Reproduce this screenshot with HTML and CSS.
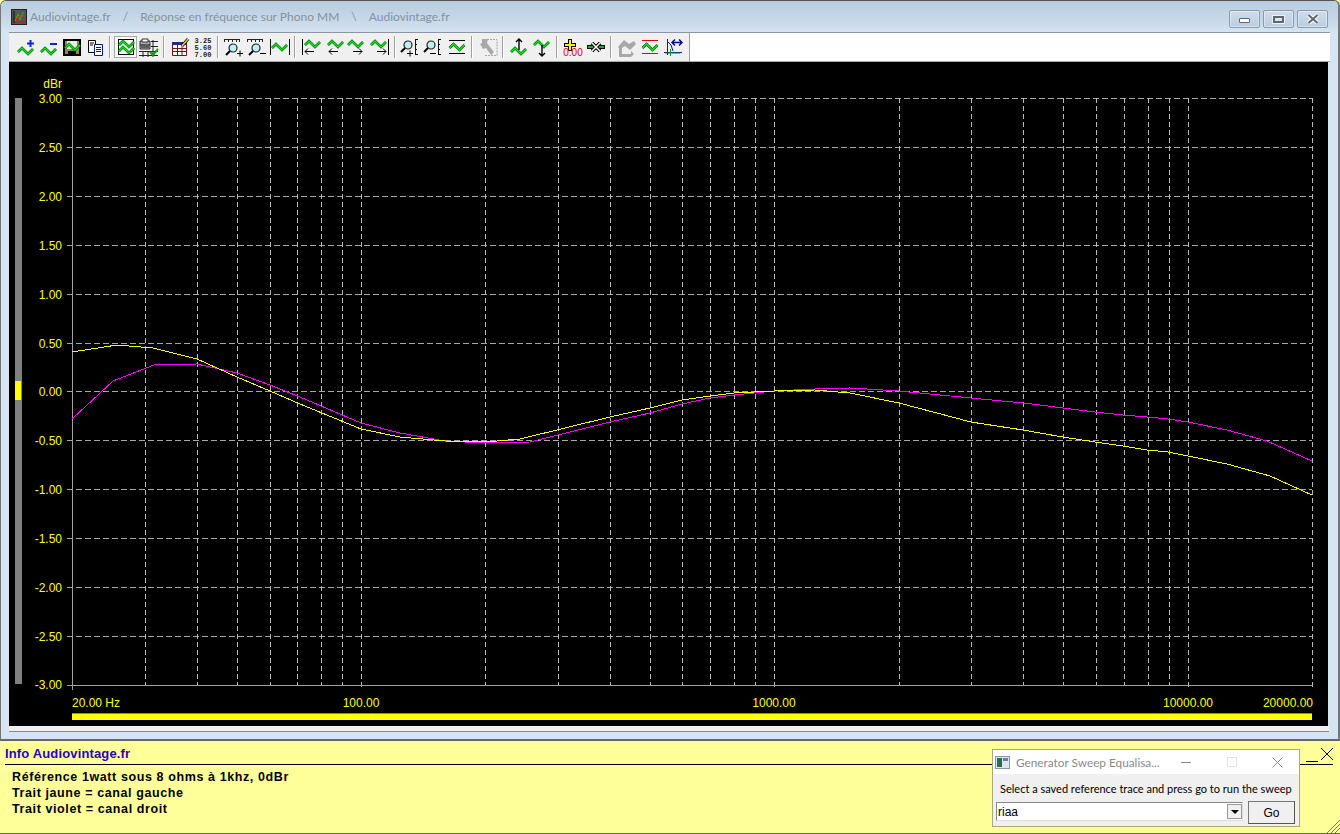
FILE: index.html
```html
<!DOCTYPE html>
<html lang="fr">
<head>
    <meta charset="UTF-8">
    <title>Audiovintage.fr - Réponse en fréquence sur Phono MM</title>
    <link rel="stylesheet" href="styles.css">
</head>
<body>
    <svg class="defs" width="0" height="0">
        <defs>
            <g id="wave">
                <path class="wave-out" d="M0 5 L4 1 L10 7 L15 2"/>
                <path class="wave-in" d="M0 5 L4 1 L10 7 L15 2"/>
            </g>
            <g id="lens">
                <circle cx="8" cy="7" r="4" class="lens-glass"/>
                <path d="M5 10 L1 14" class="lens-handle"/>
            </g>
        </defs>
    </svg>

    <div class="window">
        <div class="titlebar">
            <svg class="app-icon" viewBox="0 0 16 16">
                <rect x="0.5" y="0.5" width="15" height="15" fill="#555" stroke="#222"/>
                <path d="M2 13H14" stroke="#e00"/>
                <path d="M3 2V14" stroke="#111"/>
                <path d="M4 12L7 5L9 11L12 3" fill="none" stroke="#0c0"/>
                <path d="M5 10L8 7L10 9L13 6" fill="none" stroke="#e22"/>
            </svg>
            <span class="title-text">Audiovintage.fr</span>
            <span class="title-text title-sep">/</span>
            <span class="title-text">Réponse en fréquence sur Phono MM</span>
            <span class="title-text title-sep">\</span>
            <span class="title-text">Audiovintage.fr</span>
            <div class="win-buttons">
                <div class="win-btn"><span class="glyph-min"></span></div>
                <div class="win-btn"><span class="glyph-max"></span></div>
                <div class="win-btn">
                    <svg width="12" height="10" viewBox="0 0 12 10"><path d="M1.5 1L10.5 9M10.5 1L1.5 9" stroke="#fff" stroke-width="4"/><path d="M1.5 1L10.5 9M10.5 1L1.5 9" stroke="#5b6875" stroke-width="2"/></svg>
                </div>
            </div>
        </div>

        <div class="toolbar">
            <div class="tools">
                <svg class="tool" viewBox="0 0 22 22"><use href="#wave" x="3" y="11"/><path d="M12 7.500h7M15.500 4v7" stroke="#0a2ad0" stroke-width="2"/></svg>
                <svg class="tool" viewBox="0 0 22 22"><use href="#wave" x="3" y="11"/><path d="M12 8h7" stroke="#0a2ad0" stroke-width="2"/></svg>
                <svg class="tool" viewBox="0 0 22 22"><path d="M3 4H19V19H3Z" fill="#8a8a50" stroke="#000" stroke-width="2"/><rect x="6" y="5" width="10" height="8" fill="#e8eedc"/><rect x="7" y="15" width="8" height="4" fill="#000"/><use href="#wave" x="4" y="7"/></svg>
                <svg class="tool" viewBox="0 0 22 22"><path d="M4.500 4.500H11.500V16.500H4.500Z" fill="#fff" stroke="#000"/><path d="M10.500 8.500H18.500V19.500H10.500Z" fill="#fff" stroke="#001a80"/><path d="M12 11.500H17M12 13.500H17M12 15.500H17" stroke="#0018a0"/><path d="M6 7H10M6 9H9" stroke="#000"/></svg>
                <i class="sep"></i>
                <div class="tool-on">
                    <svg class="tool" viewBox="0 0 22 22"><rect x="3.500" y="3.500" width="15" height="15" fill="#fff" stroke="#000"/><use href="#wave" x="4" y="4"/><use href="#wave" x="4" y="10"/></svg>
                </div>
                <svg class="tool" viewBox="0 0 22 22"><path d="M2 5H12V13H2Z" fill="#aaa" stroke="#333"/><path d="M4 3H10V6H4Z" fill="#fff" stroke="#333"/><path d="M2 9H12M3 11H11" stroke="#111"/><path d="M13 5.500H20M13 10.500H20M1 15.500H20M1 19.500H20M5 15V21M10 15V21M15 4V21" stroke="#222"/><path d="M12 16L15 19L20 13" fill="none" stroke="#0a0" stroke-width="2"/></svg>
                <i class="sep"></i>
                <svg class="tool" viewBox="0 0 22 22"><path d="M3.500 7.500H17.500V19.500H3.500Z" fill="#fff" stroke="#7a1010"/><path d="M3 6H18V9H3Z" fill="#1a2a90"/><path d="M4 12.500H17M4 15.500H17M8.500 9V19M13 9V19" stroke="#7a1010"/><path d="M13 10L19 3" stroke="#111" stroke-width="3"/><path d="M13 10L19 3" stroke="#f0d020" stroke-width="1.500"/></svg>
                <svg class="tool" viewBox="0 0 22 22"><text x="11" y="7" class="mini-num">3.25</text><text x="11" y="14" class="mini-num">5.60</text><text x="11" y="21" class="mini-num">7.00</text></svg>
                <i class="sep"></i>
                <svg class="tool" viewBox="0 0 22 22"><path d="M1 3.500H17M1.500 3V6M5.500 3V6M9.500 3V6M13.500 3V6M16.500 3V6" stroke="#222"/><use href="#lens" x="2" y="5"/><path d="M14 17.500h6M17 14.500v6" stroke="#000"/></svg>
                <svg class="tool" viewBox="0 0 22 22"><path d="M1 3.500H17M1.500 3V6M5.500 3V6M9.500 3V6M13.500 3V6M16.500 3V6" stroke="#222"/><use href="#lens" x="2" y="5"/><path d="M14 17.500h6" stroke="#000"/></svg>
                <svg class="tool" viewBox="0 0 22 22"><path d="M1.500 3V19M20.500 3V19" stroke="#111"/><use href="#wave" x="3" y="7"/></svg>
                <i class="sep"></i>
                <svg class="tool" viewBox="0 0 22 22"><use href="#wave" x="5" y="4"/><path d="M2.500 3V19" stroke="#000"/><path d="M14 15.500H5M8 12.500L5 15.500L8 18.500" fill="none" stroke="#000"/></svg>
                <svg class="tool" viewBox="0 0 22 22"><use href="#wave" x="5" y="4"/><path d="M15 15.500H6M9 12.500L6 15.500L9 18.500" fill="none" stroke="#000"/></svg>
                <svg class="tool" viewBox="0 0 22 22"><use href="#wave" x="2" y="4"/><path d="M7 15.500H16M13 12.500L16 15.500L13 18.500" fill="none" stroke="#000"/></svg>
                <svg class="tool" viewBox="0 0 22 22"><use href="#wave" x="2" y="4"/><path d="M19.500 3V19" stroke="#000"/><path d="M8 15.500H17M14 12.500L17 15.500L14 18.500" fill="none" stroke="#000"/></svg>
                <i class="sep"></i>
                <svg class="tool" viewBox="0 0 22 22"><use href="#lens" x="0" y="2"/><path d="M15 3.500H18M15.500 3V19M15 8.500H17M15 13.500H17M15 18.500H18" stroke="#111"/><path d="M7 17.500h6M10 14.500v6" stroke="#000"/></svg>
                <svg class="tool" viewBox="0 0 22 22"><use href="#lens" x="0" y="2"/><path d="M15 3.500H18M15.500 3V19M15 8.500H17M15 13.500H17M15 18.500H18" stroke="#111"/><path d="M7 17.500h6" stroke="#000"/></svg>
                <svg class="tool" viewBox="0 0 22 22"><path d="M3 4.500H19M3 17.500H19" stroke="#000"/><use href="#wave" x="3.500" y="7"/></svg>
                <i class="sep"></i>
                <svg class="tool" viewBox="0 0 22 22"><path d="M7 3.500H20V19.500H7" fill="none" stroke="#a8a8a8" stroke-dasharray="2 1"/><path d="M5 3H11L10 7L13 11L17 16L14 19L9 12L6 13L3 8L5 7Z" fill="#a8a8a8"/></svg>
                <i class="sep"></i>
                <svg class="tool" viewBox="0 0 22 22"><use href="#wave" x="3" y="11"/><path d="M11 14V3M8 6L11 3L14 6" fill="none" stroke="#000" stroke-width="1.400"/></svg>
                <svg class="tool" viewBox="0 0 22 22"><use href="#wave" x="3" y="4"/><path d="M11 9V20M8 17L11 20L14 17" fill="none" stroke="#000" stroke-width="1.400"/></svg>
                <i class="sep"></i>
                <svg class="tool" viewBox="0 0 22 22"><path d="M8 3V15M2 9H14" stroke="#000" stroke-width="4"/><path d="M8 4V14M3 9H13" stroke="#ffee00" stroke-width="2"/><text x="11" y="20" class="mini-red">0.00</text></svg>
                <svg class="tool" viewBox="0 0 22 22"><path d="M2 11H20" stroke="#000" stroke-width="4"/><path d="M3 11H19" stroke="#00c000" stroke-width="2"/><path d="M7 7L15 15M15 7L7 15" stroke="#000" stroke-width="3.500"/><path d="M7 7L15 15M15 7L7 15" stroke="#fff" stroke-width="1.500"/></svg>
                <i class="sep"></i>
                <svg class="tool" viewBox="0 0 22 22"><path d="M2 11L8 4L13 8L18 5L20 8L14 14L9 10L6 12V18H15V15L18 18L15 21H3V12Z" fill="#a8a8a8"/></svg>
                <svg class="tool" viewBox="0 0 22 22"><path d="M3 4.500H19M3 17.500H19" stroke="#e00000"/><use href="#wave" x="3.500" y="7"/></svg>
                <svg class="tool" viewBox="0 0 22 22"><path d="M5.500 3V19M2 16.500H20" stroke="#0018d0"/><path d="M3 17H18" stroke="#008000"/><path d="M5 5L9 9L11 15" fill="none" stroke="#0018d0"/><path d="M8.500 13V20" stroke="#00a000"/><path d="M10 6.500H20M13 3.500L10 6.500L13 9.500M17 3.500L20 6.500L17 9.500" fill="none" stroke="#000c90" stroke-width="1.500"/></svg>
            </div>
            <div class="toolbar-rest"></div>
        </div>

        <div class="chart">
            <svg class="chart-svg" viewBox="9 62 1319 664" width="1319" height="664">
                <path class="grid grid-h" d="M67 98.500H1312M67 147.500H1312M67 196.500H1312M67 245.500H1312M67 294.500H1312M67 343.500H1312M67 391.500H1312M67 440.500H1312M67 489.500H1312M67 538.500H1312M67 587.500H1312M67 636.500H1312"/>
                <path class="grid" d="M145.500 98V685M197.500 98V685M237.500 98V685M270.500 98V685M297.500 98V685M321.500 98V685M342.500 98V685M361.500 98V689M485.500 98V685M558.500 98V685M610.500 98V685M650.500 98V685M682.500 98V685M710.500 98V685M734.500 98V685M755.500 98V685M774.500 98V689M899.500 98V685M971.500 98V685M1023.500 98V685M1063.500 98V685M1096.500 98V685M1124.500 98V685M1148.500 98V685M1169.500 98V685M1188.500 98V689M1312.500 98V689"/>
                <path class="axis" d="M72.500 98V690M67 685.500H1312"/>

                <polyline class="trace trace-m" points="72,419 113,381 154,365 197,364 237,373 270,385 300,397 361,423 400,433 445,441 485,443 530,442 610,422 650,413 682,404 710,398 734,395 774,391 815,389 850,388 899,391 971,398 1023,403 1040,405 1063,408 1095,412 1123,415 1147,417 1168,419 1188,422 1227,430 1267,441 1312,461"/>
                <polyline class="trace trace-y" points="72,352 117,345 153,348 197,359 237,377 270,391 300,404 361,429 400,437 445,441 485,442 520,439 610,417 650,408 682,400 710,396 734,393 774,391 815,390 850,393 899,403 971,422 1023,430 1040,433 1063,437 1095,442 1123,446 1147,450 1168,452 1188,456 1227,464 1270,476 1312,495"/>

                <text class="tick-y" x="62" y="88">dBr</text>
                <text class="tick-y" x="62" y="103">3.00</text>
                <text class="tick-y" x="62" y="152">2.50</text>
                <text class="tick-y" x="62" y="201">2.00</text>
                <text class="tick-y" x="62" y="250">1.50</text>
                <text class="tick-y" x="62" y="299">1.00</text>
                <text class="tick-y" x="62" y="348">0.50</text>
                <text class="tick-y" x="62" y="396">0.00</text>
                <text class="tick-y" x="62" y="445">-0.50</text>
                <text class="tick-y" x="62" y="494">-1.00</text>
                <text class="tick-y" x="62" y="543">-1.50</text>
                <text class="tick-y" x="62" y="592">-2.00</text>
                <text class="tick-y" x="62" y="641">-2.50</text>
                <text class="tick-y" x="62" y="689">-3.00</text>

                <text class="tick-x" x="72" y="707">20.00 Hz</text>
                <text class="tick-x mid" x="361" y="707">100.00</text>
                <text class="tick-x mid" x="774" y="707">1000.00</text>
                <text class="tick-x mid" x="1188" y="707">10000.00</text>
                <text class="tick-x end" x="1313" y="707">20000.00</text>

                <rect class="bar-grey" x="15" y="98" width="7" height="586"/>
                <rect class="bar-yellow" x="15" y="381" width="6" height="19"/>
                <rect class="bar-yellow" x="72" y="714" width="1240" height="6"/>
                <path class="bar-edge" d="M72 713.500H1312"/>
            </svg>
        </div>
        <div class="chart-foot"></div>
    </div>

    <div class="info">
        <div class="info-head">Info Audiovintage.fr</div>
        <div class="info-body">
            <div>Référence 1watt sous 8 ohms à 1khz, 0dBr</div>
            <div>Trait jaune = canal gauche</div>
            <div>Trait violet = canal droit</div>
        </div>
        <svg class="info-close" width="28" height="16" viewBox="0 0 28 16"><path d="M0 14.500H12M15 1L27 13M27 1L15 13" stroke="#000" fill="none"/></svg>
        <svg class="grip" width="14" height="14" viewBox="0 0 14 14"><path d="M1 14L14 1M5 14L14 5M9 14L14 9" stroke="#777"/></svg>

        <div class="sweep">
            <div class="sweep-title">
                <svg class="sweep-icon" width="15" height="13" viewBox="0 0 15 13"><rect x="0.500" y="0.500" width="14" height="12" fill="#dfe6ee" stroke="#8a96a5"/><rect x="2" y="2" width="5" height="9" fill="#2c6a55"/><rect x="8" y="2" width="5" height="3" fill="#6a7fa5"/></svg>
                <span class="sweep-name">Generator Sweep Equalisa...</span>
                <span class="sweep-ctl sweep-min"></span>
                <span class="sweep-ctl sweep-max"></span>
                <svg class="sweep-x" width="11" height="11" viewBox="0 0 11 11"><path d="M0.500 0.500L10.500 10.500M10.500 0.500L0.500 10.500" stroke="#8a8a8a"/></svg>
            </div>
            <div class="sweep-body">
                <div class="sweep-msg">Select a saved reference trace and press go to run the sweep</div>
                <div class="sweep-row">
                    <div class="combo">
                        <span class="combo-text">riaa</span>
                        <span class="combo-arrow"></span>
                    </div>
                    <button class="go-btn">Go</button>
                </div>
            </div>
        </div>
    </div>
</body>
</html>
```

FILE: styles.css
```css
html, body {
  margin: 0;
  padding: 0;
}
body {
  width: 1340px;
  height: 834px;
  overflow: hidden;
  display: flex;
  flex-direction: column;
  background-color: #ffff99;
  font-family: "Liberation Sans", Arial, sans-serif;
}
.defs {
  position: absolute;
}
.wave-out {
  fill: none;
  stroke: #0a4a20;
  stroke-width: 2.6;
}
.wave-in {
  fill: none;
  stroke: #00ee00;
  stroke-width: 1.5;
}
.lens-glass {
  fill: #bfeef5;
  stroke: #222;
  stroke-width: 1.2;
}
.lens-handle {
  fill: none;
  stroke: #000;
  stroke-width: 2;
}

/* fenetre principale */
.window {
  height: 741px;
  flex-shrink: 0;
  box-sizing: border-box;
  background-color: #d7e4f2;
  border-top: 1px solid #555;
  border-left: 1px solid #777;
  border-right: 2px solid #777;
  border-bottom: 2px solid #666;
  border-radius: 6px 6px 0 0;
  display: flex;
  flex-direction: column;
}
.titlebar {
  height: 31px;
  flex-shrink: 0;
  display: flex;
  align-items: center;
  padding-left: 10px;
  background: linear-gradient(#b8cde0, #c9dae9 70%, #d7e4f2);
  border-radius: 6px 6px 0 0;
}
.app-icon {
  width: 16px;
  height: 16px;
  margin-right: 3px;
}
.title-text {
  font-family: "Lato", sans-serif;
  font-size: 12px;
  color: #84929e;
  white-space: nowrap;
}
.title-sep {
  margin: 0 12px;
}
.win-buttons {
  margin-left: auto;
  margin-right: 10px;
  display: flex;
  gap: 3px;
  align-self: flex-start;
  margin-top: 9px;
}
.win-btn {
  width: 29px;
  height: 16px;
  border: 1px solid #8a9bb0;
  border-radius: 2px;
  background: linear-gradient(#cfdceb, #bccde0);
  box-shadow: inset 0 0 0 1px rgba(255, 255, 255, 0.4);
  display: flex;
  align-items: center;
  justify-content: center;
}
.glyph-min {
  width: 9px;
  height: 3px;
  margin-top: 3px;
  background-color: #fff;
  border: 1px solid #5b6875;
  border-radius: 1px;
}
.glyph-max {
  width: 7px;
  height: 3px;
  background-color: #dbe5ef;
  border: 2px solid #5b6875;
  outline: 1px solid rgba(255, 255, 255, 0.7);
}

/* barre d'outils */
.toolbar {
  height: 30px;
  flex-shrink: 0;
  margin: 0 8px;
  display: flex;
  border-top: 1px solid #8a96a3;
  border-bottom: 1px solid #a8a8a8;
  box-sizing: border-box;
}
.tools {
  width: 681px;
  box-sizing: border-box;
  display: flex;
  align-items: center;
  padding-left: 5px;
  background-color: #f0f0f0;
  border-right: 1px solid #a0a0a0;
}
.toolbar-rest {
  flex: 1;
  background-color: #fff;
}
.tool {
  width: 22px;
  height: 22px;
  margin: 0 0.5px;
  flex-shrink: 0;
}
.tool-on {
  display: flex;
  outline: 1px solid #a8a8a8;
  outline-offset: -1px;
  background-color: #fbfbfb;
}
.sep {
  width: 1px;
  height: 22px;
  margin: 0 3px;
  background-color: #a0a0a0;
  border-right: 1px solid #fff;
  flex-shrink: 0;
}
.mini-num {
  font-family: "Liberation Mono", monospace;
  font-size: 7px;
  font-weight: bold;
  text-anchor: middle;
  fill: #222;
}
.mini-red {
  font-family: "Liberation Sans", sans-serif;
  font-size: 10px;
  text-anchor: middle;
  fill: #e00000;
}

/* graphique */
.chart {
  height: 664px;
  flex-shrink: 0;
  margin-left: 8px;
  background-color: #000;
  width: 1319px;
}
.chart-svg {
  display: block;
}
.chart-foot {
  height: 5px;
  margin: 0 9px 0 8px;
  background-color: #f0f0f0;
  border-bottom: 1px solid #8a8a8a;
}
.grid {
  fill: none;
  stroke: #b8b8b8;
  stroke-dasharray: 5 3;
  shape-rendering: crispEdges;
}
.grid-h {
  stroke: #a8a8a8;
  stroke-dasharray: 6 3;
}
.axis {
  fill: none;
  stroke: #a0a0a0;
  shape-rendering: crispEdges;
}
.trace {
  fill: none;
  stroke-width: 1;
  shape-rendering: crispEdges;
}
.trace-y {
  stroke: #ffff00;
}
.trace-m {
  stroke: #ff00ff;
}
.tick-y {
  font-size: 12px;
  text-anchor: end;
  fill: #ffff00;
}
.tick-x {
  font-size: 12px;
  fill: #ffff00;
}
.mid {
  text-anchor: middle;
}
.end {
  text-anchor: end;
}
.bar-grey {
  fill: #808080;
}
.bar-yellow {
  fill: #ffff00;
}
.bar-edge {
  stroke: #808080;
}

/* panneau info */
.info {
  flex: 1;
  position: relative;
  background-color: #ffff99;
  border-bottom: 1px solid #666;
}
.info-head {
  height: 24px;
  margin: 0 7px 0 5px;
  box-sizing: border-box;
  padding-top: 5px;
  font-size: 13px;
  font-weight: bold;
  letter-spacing: 0.15px;
  color: #2a00c8;
  border-bottom: 1px solid #000;
}
.info-body {
  padding: 4px 0 0 12px;
  font-size: 12.5px;
  font-weight: bold;
  line-height: 16px;
  letter-spacing: 0.6px;
  color: #000;
}
.info-close {
  position: absolute;
  right: 6px;
  top: 6px;
}
.grip {
  position: absolute;
  right: 0;
  bottom: 0;
}

/* fenetre flottante */
.sweep {
  position: absolute;
  left: 992px;
  top: 8px;
  width: 308px;
  height: 78px;
  box-sizing: border-box;
  border: 1px solid #a8a878;
  background-color: #f0f0f0;
}
.sweep-title {
  height: 24px;
  padding-left: 2px;
  display: flex;
  align-items: center;
  background-color: #fff;
}
.sweep-icon {
  margin-right: 6px;
}
.sweep-name {
  font-family: "Lato", sans-serif;
  font-size: 11.8px;
  color: #8a8a8a;
  white-space: nowrap;
  width: 155px;
}
.sweep-ctl {
  display: block;
}
.sweep-min {
  width: 10px;
  height: 1px;
  margin-left: 10px;
  background-color: #888;
}
.sweep-max {
  width: 8px;
  height: 8px;
  margin-left: 36px;
  border: 1px solid #e0e0e0;
}
.sweep-x {
  margin-left: 35px;
}
.sweep-body {
  padding: 0 3px;
}
.sweep-msg {
  padding: 7px 0 0 4px;
  height: 22px;
  box-sizing: border-box;
  font-family: "Lato", sans-serif;
  font-size: 11px;
  line-height: 15px;
  color: #000;
  white-space: nowrap;
}
.sweep-row {
  margin-top: 6px;
  display: flex;
  gap: 5px;
}
.combo {
  width: 247px;
  height: 19px;
  box-sizing: border-box;
  display: flex;
  align-items: center;
  justify-content: space-between;
  background-color: #fff;
  border: 1px solid #888;
  border-bottom-color: #ddd;
  border-right-color: #ddd;
}
.combo-text {
  font-size: 12px;
  padding-left: 1px;
}
.combo-arrow {
  width: 15px;
  height: 15px;
  background-color: #f0f0f0;
  border: 1px solid #999;
  box-sizing: border-box;
  display: flex;
  align-items: center;
  justify-content: center;
}
.combo-arrow::after {
  content: "";
  border-left: 4px solid transparent;
  border-right: 4px solid transparent;
  border-top: 4px solid #000;
}
.go-btn {
  width: 47px;
  height: 23px;
  margin-top: -1px;
  padding: 0;
  font-family: "Liberation Sans", sans-serif;
  font-size: 12px;
  color: #000;
  background-color: #f0f0f0;
  border: 1px solid #777;
  border-right-color: #555;
  border-bottom-color: #555;
  border-radius: 0;
}
```
